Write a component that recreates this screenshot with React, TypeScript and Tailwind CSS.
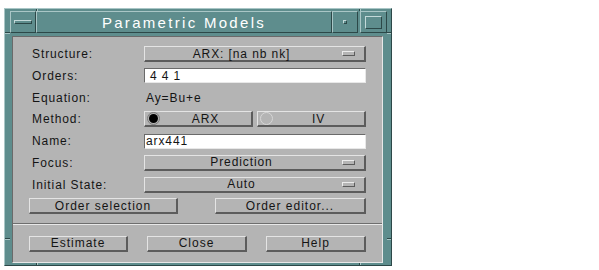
const raised =
  "border-t border-l border-b-2 border-r-2 border-t-[#e4e4e4] border-l-[#e4e4e4] border-b-[#5c5c5c] border-r-[#5c5c5c]";
const sunken =
  "border border-t-[#6a6a6a] border-l-[#6a6a6a] border-b-[#e8e8e8] border-r-[#e8e8e8]";
const frameOut =
  "border border-t-[#a9c6c6] border-l-[#a9c6c6] border-b-[#2c4848] border-r-[#2c4848]";

function Label({ text }: { text: string }) {
  return <div className="w-[112px] shrink-0 text-[12px] tracking-[0.9px] text-[#141414]">{text}</div>;
}

function OptionMenu({ value }: { value: string }) {
  return (
    <div className={`flex h-[16px] flex-1 items-center bg-[#b4b4b4] ${raised}`}>
      <span className="flex-1 text-center text-[12px] leading-none tracking-[0.9px] text-[#141414]">{value}</span>
      <span className="ml-[4px] mr-[9px] h-[5px] w-[13px] border border-t-[#ececec] border-l-[#ececec] border-b-[#5c5c5c] border-r-[#5c5c5c] bg-[#b4b4b4]" />
    </div>
  );
}

function Field({ value, pad }: { value: string; pad: string }) {
  return (
    <div className={`flex h-[15px] flex-1 items-center bg-white ${sunken} ${pad} text-[12px] leading-none tracking-[0.9px] text-[#141414]`}>
      {value}
    </div>
  );
}

function Radio({ label, on }: { label: string; on: boolean }) {
  return (
    <div className={`flex h-[16px] flex-1 items-center bg-[#b4b4b4] ${raised}`}>
      <span
        className={
          on
            ? "ml-[2px] flex h-[13px] w-[13px] items-center justify-center rounded-full border border-[#7a7a7a]"
            : "ml-[2px] flex h-[13px] w-[13px] items-center justify-center rounded-full border border-[#d6d6d6]"
        }
      >
        {on && <span className="h-[9px] w-[9px] rounded-full bg-black" />}
      </span>
      <span className="flex-1 text-center text-[12px] leading-none tracking-[0.9px] text-[#141414]">{label}</span>
    </div>
  );
}

function Button({ label, w }: { label: string; w: string }) {
  return (
    <div
      className={`flex h-[16px] ${w} items-center justify-center bg-[#b4b4b4] ${raised} text-[12px] leading-none tracking-[1px] text-[#141414]`}
    >
      {label}
    </div>
  );
}

function Row({ children }: { children: React.ReactNode }) {
  return <div className="flex h-[16px] items-center">{children}</div>;
}

export default function App() {
  return (
    <div className="h-[270px] w-[599px] bg-white pl-[4px] pt-[8px] font-['Liberation_Sans',Arial,sans-serif]">
      <div className={`relative h-[258px] w-[388px] bg-[#5e8d8d] ${frameOut} pb-[2px] pl-[5px] pr-[4px] pt-[2px]`}>
        {/* resize handle notches */}
        <span className="absolute left-[31px] top-0 h-[2px] w-[1px] bg-[#2c4848]" />
        <span className="absolute left-[32px] top-0 h-[2px] w-[1px] bg-[#a9c6c6]" />
        <span className="absolute left-0 top-[23px] h-[1px] w-[5px] bg-[#2c4848]" />
        <span className="absolute left-0 top-[24px] h-[1px] w-[5px] bg-[#a9c6c6]" />
        <span className="absolute left-[354px] top-0 h-[2px] w-[1px] bg-[#2c4848]" />
        <span className="absolute left-[355px] top-0 h-[2px] w-[1px] bg-[#a9c6c6]" />
        <span className="absolute right-0 top-[23px] h-[1px] w-[4px] bg-[#2c4848]" />
        <span className="absolute right-0 top-[24px] h-[1px] w-[4px] bg-[#a9c6c6]" />
        <span className="absolute bottom-0 left-[31px] h-[2px] w-[1px] bg-[#2c4848]" />
        <span className="absolute bottom-0 left-[32px] h-[2px] w-[1px] bg-[#a9c6c6]" />
        <span className="absolute left-0 top-[229px] h-[1px] w-[5px] bg-[#2c4848]" />
        <span className="absolute left-0 top-[230px] h-[1px] w-[5px] bg-[#a9c6c6]" />
        <span className="absolute bottom-0 left-[354px] h-[2px] w-[1px] bg-[#2c4848]" />
        <span className="absolute bottom-0 left-[355px] h-[2px] w-[1px] bg-[#a9c6c6]" />
        <span className="absolute right-0 top-[229px] h-[1px] w-[4px] bg-[#2c4848]" />
        <span className="absolute right-0 top-[230px] h-[1px] w-[4px] bg-[#a9c6c6]" />

        {/* title bar */}
        <div className="flex h-[22px]">
          <div className={`flex w-[26px] items-center justify-center ${frameOut}`}>
            <span className="h-[4px] w-[18px] border border-t-[#c3d9d9] border-l-[#c3d9d9] border-b-[#2c4848] border-r-[#2c4848]" />
          </div>
          <div className={`flex flex-1 items-center justify-center ${frameOut} text-[15px] leading-none tracking-[2.3px] text-white`}>
            Parametric Models
          </div>
          <div className={`flex w-[26px] items-center justify-center ${frameOut}`}>
            <span className="h-[4px] w-[4px] border border-t-[#c3d9d9] border-l-[#c3d9d9] border-b-[#2c4848] border-r-[#2c4848]" />
          </div>
          <div className="w-[2px]" />
          <div className={`flex w-[27px] items-center justify-center ${frameOut}`}>
            <span className="h-[13px] w-[17px] border border-t-[#c3d9d9] border-l-[#c3d9d9] border-b-[#2c4848] border-r-[#2c4848]" />
          </div>
        </div>

        {/* client area */}
        <div className={`ml-[2px] mr-[4px] mt-[3px] flex h-[227px] flex-col bg-[#b4b4b4] ${sunken}`}>
          <div className="flex h-[187px] flex-col gap-[5.75px] border-b border-b-[#6e6e6e] pl-[19px] pr-[16px] pt-[9px]">
            <Row>
              <Label text="Structure:" />
              <OptionMenu value="ARX: [na nb nk]" />
            </Row>
            <Row>
              <Label text="Orders:" />
              <Field value="4 4 1" pad="pl-[5px]" />
            </Row>
            <Row>
              <Label text="Equation:" />
              <span className="pl-[2px] text-[12px] tracking-[0.9px] text-[#141414]">Ay=Bu+e</span>
            </Row>
            <Row>
              <Label text="Method:" />
              <div className="flex flex-1 gap-[4px]">
                <Radio label="ARX" on />
                <Radio label="IV" on={false} />
              </div>
            </Row>
            <Row>
              <Label text="Name:" />
              <Field value="arx441" pad="pl-[1px]" />
            </Row>
            <Row>
              <Label text="Focus:" />
              <OptionMenu value="Prediction" />
            </Row>
            <Row>
              <Label text="Initial State:" />
              <OptionMenu value="Auto" />
            </Row>
            <div className="-ml-[3px] flex h-[16px] justify-between">
              <Button label="Order selection" w="w-[149px]" />
              <Button label="Order editor..." w="w-[151px]" />
            </div>
          </div>
          <div className="flex flex-1 items-center gap-[19px] border-t border-t-[#e8e8e8] pl-[16px]">
            <Button label="Estimate" w="w-[99px]" />
            <Button label="Close" w="w-[100px]" />
            <Button label="Help" w="w-[100px]" />
          </div>
        </div>
      </div>
    </div>
  );
}
